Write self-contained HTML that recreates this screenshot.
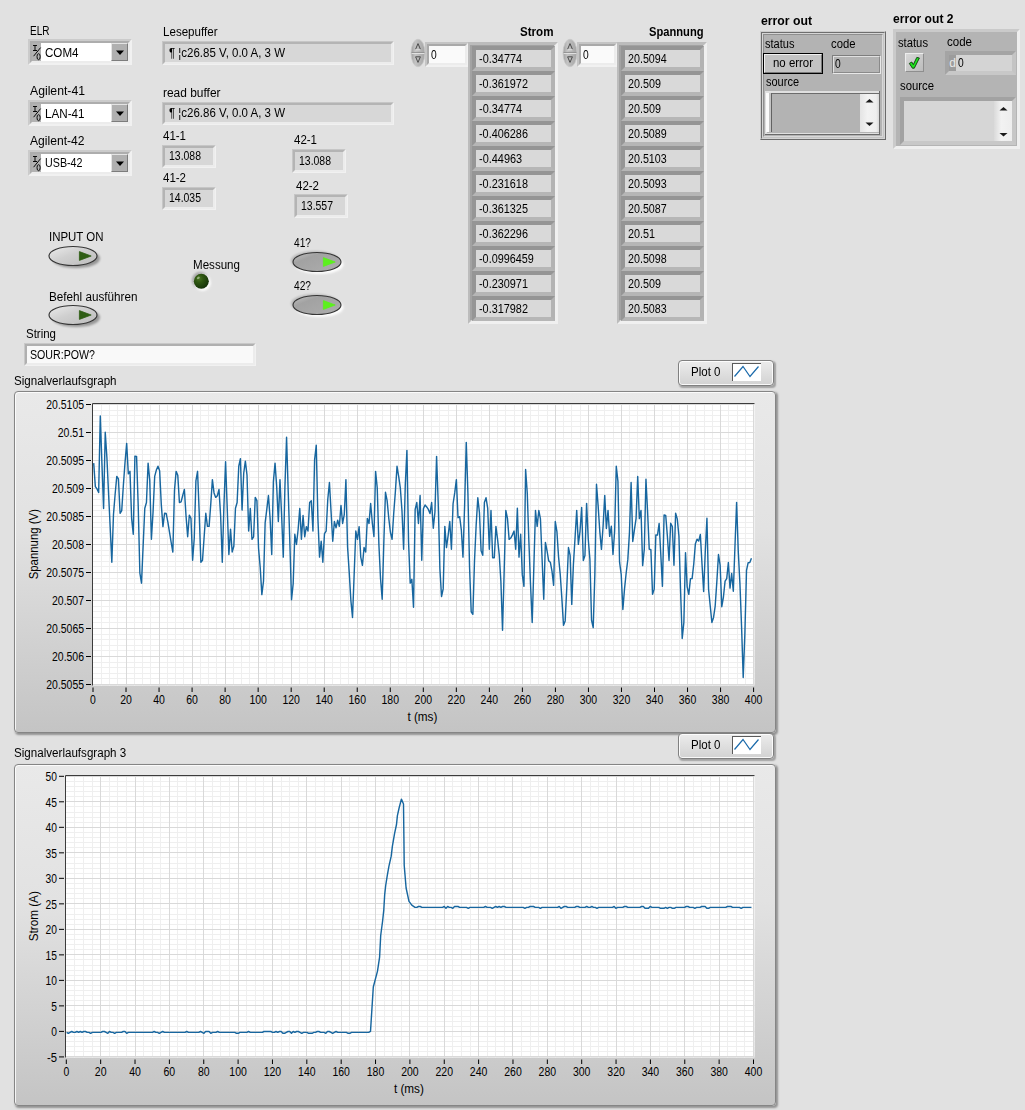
<!DOCTYPE html>
<html><head><meta charset="utf-8"><title>Front Panel</title>
<style>
html,body{margin:0;padding:0;}
body{width:1025px;height:1110px;background:#e1e1e1;position:relative;overflow:hidden;font-family:"Liberation Sans",sans-serif;font-size:12px;color:#000;}
.t{position:absolute;white-space:pre;line-height:14px;transform-origin:0 0;}
div{box-sizing:content-box;}
</style></head><body>
<div class="t" style="left:30.00px;top:24.04px;font-size:12.0px;transform:scaleX(0.8353);">ELR</div>
<div style="position:absolute;left:28px;top:39px;width:100px;height:22px;border:2px solid;border-color:#cbcbcb #f1f1f1 #f1f1f1 #cbcbcb;"><div style="width:96px;height:18px;border:2px solid;border-color:#adadad #ececec #ececec #adadad;background:#fff;"></div></div>
<div style="position:absolute;left:32px;top:43px;width:9px;height:18px;background:#b2b2b2;"></div>
<svg style="position:absolute;left:32px;top:43px" width="10" height="18" viewBox="0 0 10 18"><path d="M1 2.5h4M3 2.5v5M1 7.5h4" stroke="#000" stroke-width="0.95" fill="none"/><path d="M1.6 13.2L8.6 4.6" stroke="#000" stroke-width="0.95" fill="none"/><ellipse cx="6.6" cy="13.7" rx="1.6" ry="3" stroke="#000" stroke-width="0.95" fill="none"/></svg>
<div style="position:absolute;left:111px;top:43px;width:15px;height:16px;border:1px solid;border-color:#e4e4e4 #7c7c7c #7c7c7c #e4e4e4;background:#b0b0b0;"></div>
<svg style="position:absolute;left:111px;top:43px" width="17" height="18"><path d="M5 7.5h8l-4 4.5z" fill="#000"/></svg>
<div class="t" style="left:44.50px;top:45.74px;font-size:12.0px;transform:scaleX(0.9662);">COM4</div>
<div class="t" style="left:30.00px;top:84.04px;font-size:12.0px;transform:scaleX(1.0179);">Agilent-41</div>
<div style="position:absolute;left:28px;top:100px;width:100px;height:22px;border:2px solid;border-color:#cbcbcb #f1f1f1 #f1f1f1 #cbcbcb;"><div style="width:96px;height:18px;border:2px solid;border-color:#adadad #ececec #ececec #adadad;background:#fff;"></div></div>
<div style="position:absolute;left:32px;top:104px;width:9px;height:18px;background:#b2b2b2;"></div>
<svg style="position:absolute;left:32px;top:104px" width="10" height="18" viewBox="0 0 10 18"><path d="M1 2.5h4M3 2.5v5M1 7.5h4" stroke="#000" stroke-width="0.95" fill="none"/><path d="M1.6 13.2L8.6 4.6" stroke="#000" stroke-width="0.95" fill="none"/><ellipse cx="6.6" cy="13.7" rx="1.6" ry="3" stroke="#000" stroke-width="0.95" fill="none"/></svg>
<div style="position:absolute;left:111px;top:104px;width:15px;height:16px;border:1px solid;border-color:#e4e4e4 #7c7c7c #7c7c7c #e4e4e4;background:#b0b0b0;"></div>
<svg style="position:absolute;left:111px;top:104px" width="17" height="18"><path d="M5 7.5h8l-4 4.5z" fill="#000"/></svg>
<div class="t" style="left:44.50px;top:106.74px;font-size:12.0px;transform:scaleX(0.9708);">LAN-41</div>
<div class="t" style="left:30.00px;top:134.04px;font-size:12.0px;transform:scaleX(1.0086);">Agilent-42</div>
<div style="position:absolute;left:28px;top:149.5px;width:100px;height:22px;border:2px solid;border-color:#cbcbcb #f1f1f1 #f1f1f1 #cbcbcb;"><div style="width:96px;height:18px;border:2px solid;border-color:#adadad #ececec #ececec #adadad;background:#fff;"></div></div>
<div style="position:absolute;left:32px;top:153.5px;width:9px;height:18px;background:#b2b2b2;"></div>
<svg style="position:absolute;left:32px;top:153.5px" width="10" height="18" viewBox="0 0 10 18"><path d="M1 2.5h4M3 2.5v5M1 7.5h4" stroke="#000" stroke-width="0.95" fill="none"/><path d="M1.6 13.2L8.6 4.6" stroke="#000" stroke-width="0.95" fill="none"/><ellipse cx="6.6" cy="13.7" rx="1.6" ry="3" stroke="#000" stroke-width="0.95" fill="none"/></svg>
<div style="position:absolute;left:111px;top:153.5px;width:15px;height:16px;border:1px solid;border-color:#e4e4e4 #7c7c7c #7c7c7c #e4e4e4;background:#b0b0b0;"></div>
<svg style="position:absolute;left:111px;top:153.5px" width="17" height="18"><path d="M5 7.5h8l-4 4.5z" fill="#000"/></svg>
<div class="t" style="left:44.50px;top:156.24px;font-size:12.0px;transform:scaleX(0.8925);">USB-42</div>
<div class="t" style="left:163.00px;top:25.04px;font-size:12.0px;transform:scaleX(0.9648);">Lesepuffer</div>
<div style="position:absolute;left:162px;top:41px;width:230px;height:21.5px;border:1px solid;border-color:#c6c6c6 #f1f1f1 #f1f1f1 #c6c6c6;"><div style="width:226px;height:17.5px;border:2px solid;border-color:#b4b4b4 #ececec #ececec #b4b4b4;background:#d7d7d7;"></div></div>
<div class="t" style="left:168.50px;top:45.74px;font-size:12.0px;transform:scaleX(0.9572);">¶ ¦c26.85 V, 0.0 A, 3 W</div>
<div class="t" style="left:163.00px;top:86.04px;font-size:12.0px;transform:scaleX(0.9945);">read buffer</div>
<div style="position:absolute;left:162px;top:101.5px;width:230px;height:21.5px;border:1px solid;border-color:#c6c6c6 #f1f1f1 #f1f1f1 #c6c6c6;"><div style="width:226px;height:17.5px;border:2px solid;border-color:#b4b4b4 #ececec #ececec #b4b4b4;background:#d7d7d7;"></div></div>
<div class="t" style="left:168.50px;top:106.24px;font-size:12.0px;transform:scaleX(0.9572);">¶ ¦c26.86 V, 0.0 A, 3 W</div>
<div class="t" style="left:163.00px;top:129.04px;font-size:12.0px;transform:scaleX(0.9576);">41-1</div>
<div style="position:absolute;left:162px;top:144.5px;width:52px;height:21.5px;border:1px solid;border-color:#c6c6c6 #f1f1f1 #f1f1f1 #c6c6c6;"><div style="width:48px;height:17.5px;border:2px solid;border-color:#b4b4b4 #ececec #ececec #b4b4b4;background:#d7d7d7;"></div></div>
<div class="t" style="left:168.50px;top:149.24px;font-size:12.0px;transform:scaleX(0.8719);">13.088</div>
<div class="t" style="left:163.00px;top:171.04px;font-size:12.0px;transform:scaleX(0.9576);">41-2</div>
<div style="position:absolute;left:162px;top:186.5px;width:52px;height:21.5px;border:1px solid;border-color:#c6c6c6 #f1f1f1 #f1f1f1 #c6c6c6;"><div style="width:48px;height:17.5px;border:2px solid;border-color:#b4b4b4 #ececec #ececec #b4b4b4;background:#d7d7d7;"></div></div>
<div class="t" style="left:168.50px;top:191.24px;font-size:12.0px;transform:scaleX(0.8719);">14.035</div>
<div class="t" style="left:293.50px;top:133.04px;font-size:12.0px;transform:scaleX(0.9576);">42-1</div>
<div style="position:absolute;left:292px;top:149px;width:52px;height:21.5px;border:1px solid;border-color:#c6c6c6 #f1f1f1 #f1f1f1 #c6c6c6;"><div style="width:48px;height:17.5px;border:2px solid;border-color:#b4b4b4 #ececec #ececec #b4b4b4;background:#d7d7d7;"></div></div>
<div class="t" style="left:298.50px;top:153.74px;font-size:12.0px;transform:scaleX(0.8719);">13.088</div>
<div class="t" style="left:295.50px;top:179.04px;font-size:12.0px;transform:scaleX(0.9576);">42-2</div>
<div style="position:absolute;left:294px;top:194px;width:52px;height:22.0px;border:1px solid;border-color:#c6c6c6 #f1f1f1 #f1f1f1 #c6c6c6;"><div style="width:48px;height:18.0px;border:2px solid;border-color:#b4b4b4 #ececec #ececec #b4b4b4;background:#d7d7d7;"></div></div>
<div class="t" style="left:300.50px;top:199.24px;font-size:12.0px;transform:scaleX(0.8719);">13.557</div>
<div class="t" style="left:48.50px;top:229.54px;font-size:12.0px;transform:scaleX(0.9542);">INPUT ON</div>
<svg style="position:absolute;left:38.8px;top:237.5px" width="68" height="36" viewBox="0 0 68 36"><defs><linearGradient id="g72255" x1="0" y1="0" x2="1" y2="1"><stop offset="0" stop-color="#ececec"/><stop offset="0.45" stop-color="#cfcfcf"/><stop offset="1" stop-color="#bdbdbd"/></linearGradient><filter id="fg72255" x="-20%" y="-40%" width="140%" height="180%"><feGaussianBlur stdDeviation="1.3"/></filter></defs><ellipse cx="37" cy="20.5" rx="24" ry="9.5" fill="#000" opacity="0.33" filter="url(#fg72255)"/><ellipse cx="34" cy="18" rx="24" ry="9.5" fill="url(#g72255)" stroke="#363636" stroke-width="1.15"/><path d="M40.4 13.6l11.8 4.4l-11.8 4.4z" fill="#2f5d14" stroke="#2f5d14" stroke-width="0.8" stroke-linejoin="round"/></svg>
<div class="t" style="left:49.00px;top:289.54px;font-size:12.0px;transform:scaleX(0.9754);">Befehl ausführen</div>
<svg style="position:absolute;left:38.8px;top:297px" width="68" height="36" viewBox="0 0 68 36"><defs><linearGradient id="g72315" x1="0" y1="0" x2="1" y2="1"><stop offset="0" stop-color="#ececec"/><stop offset="0.45" stop-color="#cfcfcf"/><stop offset="1" stop-color="#bdbdbd"/></linearGradient><filter id="fg72315" x="-20%" y="-40%" width="140%" height="180%"><feGaussianBlur stdDeviation="1.3"/></filter></defs><ellipse cx="37" cy="20.5" rx="24" ry="9.5" fill="#000" opacity="0.33" filter="url(#fg72315)"/><ellipse cx="34" cy="18" rx="24" ry="9.5" fill="url(#g72315)" stroke="#363636" stroke-width="1.15"/><path d="M40.4 13.6l11.8 4.4l-11.8 4.4z" fill="#2f5d14" stroke="#2f5d14" stroke-width="0.8" stroke-linejoin="round"/></svg>
<div class="t" style="left:293.50px;top:235.54px;font-size:12.0px;transform:scaleX(0.8491);">41?</div>
<svg style="position:absolute;left:282.8px;top:243.5px" width="68" height="36" viewBox="0 0 68 36"><defs><linearGradient id="g316261" x1="0" y1="0" x2="1" y2="1"><stop offset="0" stop-color="#c4c4c4"/><stop offset="0.3" stop-color="#a2a2a2"/><stop offset="1" stop-color="#adadad"/></linearGradient><filter id="fg316261" x="-20%" y="-40%" width="140%" height="180%"><feGaussianBlur stdDeviation="1.3"/></filter></defs><ellipse cx="32" cy="16.5" rx="24" ry="9.5" fill="#000" opacity="0.18" filter="url(#fg316261)"/><ellipse cx="36.5" cy="20.5" rx="24" ry="9.5" fill="#fff" opacity="0.95" filter="url(#fg316261)"/><ellipse cx="34" cy="18" rx="24" ry="9.5" fill="url(#g316261)" stroke="#363636" stroke-width="1.15"/><path d="M40.4 13.6l11.8 4.4l-11.8 4.4z" fill="#5cf01e" stroke="#5cf01e" stroke-width="0.8" stroke-linejoin="round"/></svg>
<div class="t" style="left:293.50px;top:278.84px;font-size:12.0px;transform:scaleX(0.8491);">42?</div>
<svg style="position:absolute;left:282.8px;top:286.5px" width="68" height="36" viewBox="0 0 68 36"><defs><linearGradient id="g316304" x1="0" y1="0" x2="1" y2="1"><stop offset="0" stop-color="#c4c4c4"/><stop offset="0.3" stop-color="#a2a2a2"/><stop offset="1" stop-color="#adadad"/></linearGradient><filter id="fg316304" x="-20%" y="-40%" width="140%" height="180%"><feGaussianBlur stdDeviation="1.3"/></filter></defs><ellipse cx="32" cy="16.5" rx="24" ry="9.5" fill="#000" opacity="0.18" filter="url(#fg316304)"/><ellipse cx="36.5" cy="20.5" rx="24" ry="9.5" fill="#fff" opacity="0.95" filter="url(#fg316304)"/><ellipse cx="34" cy="18" rx="24" ry="9.5" fill="url(#g316304)" stroke="#363636" stroke-width="1.15"/><path d="M40.4 13.6l11.8 4.4l-11.8 4.4z" fill="#5cf01e" stroke="#5cf01e" stroke-width="0.8" stroke-linejoin="round"/></svg>
<div class="t" style="left:192.50px;top:258.04px;font-size:12.0px;transform:scaleX(0.9653);">Messung</div>
<svg style="position:absolute;left:185px;top:265px" width="34" height="34" viewBox="0 0 34 34"><defs><radialGradient id="led" cx="0.35" cy="0.32" r="0.75"><stop offset="0" stop-color="#4a7524"/><stop offset="0.35" stop-color="#2f5712"/><stop offset="1" stop-color="#14300a"/></radialGradient><filter id="lf" x="-30%" y="-30%" width="160%" height="160%"><feGaussianBlur stdDeviation="1"/></filter></defs><circle cx="15.3" cy="15.3" r="8.3" fill="#000" opacity="0.28" filter="url(#lf)"/><circle cx="17.6" cy="17.6" r="8.3" fill="#fff" opacity="0.95" filter="url(#lf)"/><circle cx="16.3" cy="16.3" r="7.5" fill="url(#led)"/><ellipse cx="13.3" cy="12.8" rx="1.6" ry="1.1" fill="#b9cfa6" opacity="0.7" transform="rotate(-35 13.3 12.8)"/></svg>
<div class="t" style="left:25.50px;top:326.54px;font-size:12.0px;transform:scaleX(0.9570);">String</div>
<div style="position:absolute;left:24px;top:342.5px;width:230px;height:21.5px;border:1px solid;border-color:#c8c8c8 #f1f1f1 #f1f1f1 #c8c8c8;"><div style="width:226px;height:17.5px;border:2px solid;border-color:#b0b0b0 #ececec #ececec #b0b0b0;background:#f9f9f9;"></div></div>
<div class="t" style="left:30.00px;top:347.74px;font-size:12.0px;transform:scaleX(0.8862);">SOUR:POW?</div>
<svg style="position:absolute;left:408.8px;top:37px" width="18" height="32" viewBox="0 0 18 32"><defs><linearGradient id="s417" x1="0" y1="0" x2="1" y2="0"><stop offset="0" stop-color="#9e9e9e"/><stop offset="0.3" stop-color="#c4c4c4"/><stop offset="1" stop-color="#a4a4a4"/></linearGradient></defs><ellipse cx="9" cy="16" rx="7" ry="13.8" fill="url(#s417)" stroke="#c9c9c9" stroke-width="0.8"/><path d="M2.6 16.4h12.8" stroke="#e6e6e6" stroke-width="1"/><path d="M2.6 15.5h12.8" stroke="#8c8c8c" stroke-width="0.8"/><path d="M6.6 12.2L9 6.6L11.4 12.2" stroke="#4a4a4a" stroke-width="1" fill="none"/><path d="M6.6 12.8h4.8" stroke="#e4e4e4" stroke-width="0.9"/><path d="M6.6 19.8L9 25.4L11.4 19.8z" stroke="#4a4a4a" stroke-width="1" fill="none"/></svg>
<div style="position:absolute;left:424.5px;top:42px;width:40.0px;height:21px;border:2px solid;border-color:#c4c4c4 #f1f1f1 #f1f1f1 #c4c4c4;"><div style="width:36.0px;height:17px;border:2px solid;border-color:#a9a9a9 #ececec #ececec #a9a9a9;background:#fafafa;"></div></div>
<div class="t" style="left:430.70px;top:47.84px;font-size:12.0px;transform:scaleX(0.8541);">0</div>
<div style="position:absolute;left:468px;top:42px;width:82px;height:274px;border-style:solid;border-width:4px 4px 4px 4px;border-color:#bcbcbc #f0f0f0 #f0f0f0 #bcbcbc;background:#a9a9a9;"></div>
<div style="position:absolute;left:470px;top:44.5px;width:84px;height:275.5px;border-style:solid;border-width:2px 0 0 2px;border-color:#a2a2a2;box-sizing:border-box;"></div>
<div style="position:absolute;left:472px;top:46px;width:75px;height:17px;border:4px solid;border-color:#959595 #b3b3b3 #b6b6b6 #959595;background:#d9d9d9;"></div>
<div class="t" style="left:478.70px;top:51.54px;font-size:12.0px;transform:scaleX(0.9098);">-0.34774</div>
<div style="position:absolute;left:472px;top:71px;width:75px;height:17px;border:4px solid;border-color:#959595 #b3b3b3 #b6b6b6 #959595;background:#d9d9d9;"></div>
<div class="t" style="left:478.70px;top:76.54px;font-size:12.0px;transform:scaleX(0.9057);">-0.361972</div>
<div style="position:absolute;left:472px;top:96px;width:75px;height:17px;border:4px solid;border-color:#959595 #b3b3b3 #b6b6b6 #959595;background:#d9d9d9;"></div>
<div class="t" style="left:478.70px;top:101.54px;font-size:12.0px;transform:scaleX(0.9098);">-0.34774</div>
<div style="position:absolute;left:472px;top:121px;width:75px;height:17px;border:4px solid;border-color:#959595 #b3b3b3 #b6b6b6 #959595;background:#d9d9d9;"></div>
<div class="t" style="left:478.70px;top:126.54px;font-size:12.0px;transform:scaleX(0.9057);">-0.406286</div>
<div style="position:absolute;left:472px;top:146px;width:75px;height:17px;border:4px solid;border-color:#959595 #b3b3b3 #b6b6b6 #959595;background:#d9d9d9;"></div>
<div class="t" style="left:478.70px;top:151.54px;font-size:12.0px;transform:scaleX(0.9098);">-0.44963</div>
<div style="position:absolute;left:472px;top:171px;width:75px;height:17px;border:4px solid;border-color:#959595 #b3b3b3 #b6b6b6 #959595;background:#d9d9d9;"></div>
<div class="t" style="left:478.70px;top:176.54px;font-size:12.0px;transform:scaleX(0.9057);">-0.231618</div>
<div style="position:absolute;left:472px;top:196px;width:75px;height:17px;border:4px solid;border-color:#959595 #b3b3b3 #b6b6b6 #959595;background:#d9d9d9;"></div>
<div class="t" style="left:478.70px;top:201.54px;font-size:12.0px;transform:scaleX(0.9057);">-0.361325</div>
<div style="position:absolute;left:472px;top:221px;width:75px;height:17px;border:4px solid;border-color:#959595 #b3b3b3 #b6b6b6 #959595;background:#d9d9d9;"></div>
<div class="t" style="left:478.70px;top:226.54px;font-size:12.0px;transform:scaleX(0.9057);">-0.362296</div>
<div style="position:absolute;left:472px;top:246px;width:75px;height:17px;border:4px solid;border-color:#959595 #b3b3b3 #b6b6b6 #959595;background:#d9d9d9;"></div>
<div class="t" style="left:478.70px;top:251.54px;font-size:12.0px;transform:scaleX(0.9025);">-0.0996459</div>
<div style="position:absolute;left:472px;top:271px;width:75px;height:17px;border:4px solid;border-color:#959595 #b3b3b3 #b6b6b6 #959595;background:#d9d9d9;"></div>
<div class="t" style="left:478.70px;top:276.54px;font-size:12.0px;transform:scaleX(0.9057);">-0.230971</div>
<div style="position:absolute;left:472px;top:296px;width:75px;height:17px;border:4px solid;border-color:#959595 #b3b3b3 #b6b6b6 #959595;background:#d9d9d9;"></div>
<div class="t" style="left:478.70px;top:301.54px;font-size:12.0px;transform:scaleX(0.9057);">-0.317982</div>
<div class="t" style="left:519.50px;top:25.04px;font-size:12.0px;transform:scaleX(0.9662);font-weight:bold;">Strom</div>
<svg style="position:absolute;left:561.0999999999999px;top:37px" width="18" height="32" viewBox="0 0 18 32"><defs><linearGradient id="s570" x1="0" y1="0" x2="1" y2="0"><stop offset="0" stop-color="#9e9e9e"/><stop offset="0.3" stop-color="#c4c4c4"/><stop offset="1" stop-color="#a4a4a4"/></linearGradient></defs><ellipse cx="9" cy="16" rx="7" ry="13.8" fill="url(#s570)" stroke="#c9c9c9" stroke-width="0.8"/><path d="M2.6 16.4h12.8" stroke="#e6e6e6" stroke-width="1"/><path d="M2.6 15.5h12.8" stroke="#8c8c8c" stroke-width="0.8"/><path d="M6.6 12.2L9 6.6L11.4 12.2" stroke="#4a4a4a" stroke-width="1" fill="none"/><path d="M6.6 12.8h4.8" stroke="#e4e4e4" stroke-width="0.9"/><path d="M6.6 19.8L9 25.4L11.4 19.8z" stroke="#4a4a4a" stroke-width="1" fill="none"/></svg>
<div style="position:absolute;left:576.8px;top:42px;width:37.1px;height:21px;border:2px solid;border-color:#c4c4c4 #f1f1f1 #f1f1f1 #c4c4c4;"><div style="width:33.1px;height:17px;border:2px solid;border-color:#a9a9a9 #ececec #ececec #a9a9a9;background:#fafafa;"></div></div>
<div class="t" style="left:583.00px;top:47.84px;font-size:12.0px;transform:scaleX(0.8541);">0</div>
<div style="position:absolute;left:617.4px;top:42px;width:82px;height:274px;border-style:solid;border-width:4px 4px 4px 4px;border-color:#bcbcbc #f0f0f0 #f0f0f0 #bcbcbc;background:#a9a9a9;"></div>
<div style="position:absolute;left:619.4px;top:44.5px;width:84px;height:275.5px;border-style:solid;border-width:2px 0 0 2px;border-color:#a2a2a2;box-sizing:border-box;"></div>
<div style="position:absolute;left:621.4px;top:46px;width:75px;height:17px;border:4px solid;border-color:#959595 #b3b3b3 #b6b6b6 #959595;background:#d9d9d9;"></div>
<div class="t" style="left:628.10px;top:51.54px;font-size:12.0px;transform:scaleX(0.8922);">20.5094</div>
<div style="position:absolute;left:621.4px;top:71px;width:75px;height:17px;border:4px solid;border-color:#959595 #b3b3b3 #b6b6b6 #959595;background:#d9d9d9;"></div>
<div class="t" style="left:628.10px;top:76.54px;font-size:12.0px;transform:scaleX(0.8951);">20.509</div>
<div style="position:absolute;left:621.4px;top:96px;width:75px;height:17px;border:4px solid;border-color:#959595 #b3b3b3 #b6b6b6 #959595;background:#d9d9d9;"></div>
<div class="t" style="left:628.10px;top:101.54px;font-size:12.0px;transform:scaleX(0.8951);">20.509</div>
<div style="position:absolute;left:621.4px;top:121px;width:75px;height:17px;border:4px solid;border-color:#959595 #b3b3b3 #b6b6b6 #959595;background:#d9d9d9;"></div>
<div class="t" style="left:628.10px;top:126.54px;font-size:12.0px;transform:scaleX(0.8922);">20.5089</div>
<div style="position:absolute;left:621.4px;top:146px;width:75px;height:17px;border:4px solid;border-color:#959595 #b3b3b3 #b6b6b6 #959595;background:#d9d9d9;"></div>
<div class="t" style="left:628.10px;top:151.54px;font-size:12.0px;transform:scaleX(0.8922);">20.5103</div>
<div style="position:absolute;left:621.4px;top:171px;width:75px;height:17px;border:4px solid;border-color:#959595 #b3b3b3 #b6b6b6 #959595;background:#d9d9d9;"></div>
<div class="t" style="left:628.10px;top:176.54px;font-size:12.0px;transform:scaleX(0.8922);">20.5093</div>
<div style="position:absolute;left:621.4px;top:196px;width:75px;height:17px;border:4px solid;border-color:#959595 #b3b3b3 #b6b6b6 #959595;background:#d9d9d9;"></div>
<div class="t" style="left:628.10px;top:201.54px;font-size:12.0px;transform:scaleX(0.8922);">20.5087</div>
<div style="position:absolute;left:621.4px;top:221px;width:75px;height:17px;border:4px solid;border-color:#959595 #b3b3b3 #b6b6b6 #959595;background:#d9d9d9;"></div>
<div class="t" style="left:628.10px;top:226.54px;font-size:12.0px;transform:scaleX(0.8992);">20.51</div>
<div style="position:absolute;left:621.4px;top:246px;width:75px;height:17px;border:4px solid;border-color:#959595 #b3b3b3 #b6b6b6 #959595;background:#d9d9d9;"></div>
<div class="t" style="left:628.10px;top:251.54px;font-size:12.0px;transform:scaleX(0.8922);">20.5098</div>
<div style="position:absolute;left:621.4px;top:271px;width:75px;height:17px;border:4px solid;border-color:#959595 #b3b3b3 #b6b6b6 #959595;background:#d9d9d9;"></div>
<div class="t" style="left:628.10px;top:276.54px;font-size:12.0px;transform:scaleX(0.8951);">20.509</div>
<div style="position:absolute;left:621.4px;top:296px;width:75px;height:17px;border:4px solid;border-color:#959595 #b3b3b3 #b6b6b6 #959595;background:#d9d9d9;"></div>
<div class="t" style="left:628.10px;top:301.54px;font-size:12.0px;transform:scaleX(0.8922);">20.5083</div>
<div class="t" style="left:648.70px;top:25.04px;font-size:12.0px;transform:scaleX(0.9291);font-weight:bold;">Spannung</div>
<div class="t" style="left:760.70px;top:13.54px;font-size:12.0px;transform:scaleX(1.0199);font-weight:bold;">error out</div>
<div style="position:absolute;left:759.5px;top:31px;width:124.5px;height:106.75px;border:1px solid;border-color:#cdcdcd #6a6a6a #6a6a6a #cdcdcd;background:#b3b3b3;"></div>
<div style="position:absolute;left:760.5px;top:32px;width:122.5px;height:104.75px;border:1px solid;border-color:#6e6e6e #d4d4d4 #d4d4d4 #6e6e6e;"></div>
<div style="position:absolute;left:761.5px;top:33px;width:120.5px;height:102.75px;border:1px solid;border-color:#d6d6d6 #c4c4c4 #c4c4c4 #d6d6d6;"></div>
<div style="position:absolute;left:762.5px;top:34px;width:118.5px;height:100.75px;border:1px solid;border-color:#8e8e8e #d8d8d8 #d8d8d8 #8e8e8e;"></div>
<div class="t" style="left:764.80px;top:36.64px;font-size:12.0px;transform:scaleX(0.9214);">status</div>
<div style="position:absolute;left:763px;top:53px;width:58px;height:19px;border:1px solid #000;background:#c3c3c3;"></div>
<div style="position:absolute;left:764px;top:54px;width:56px;height:17px;border:1px solid;border-color:#f0f0f0 #7a7a7a #7a7a7a #f0f0f0;"></div>
<div class="t" style="left:772.50px;top:56.04px;font-size:12.0px;transform:scaleX(0.9520);">no error</div>
<div class="t" style="left:830.50px;top:37.14px;font-size:12.0px;transform:scaleX(0.9416);">code</div>
<div style="position:absolute;left:831.5px;top:54.5px;width:47px;height:17.5px;border:1px solid;border-color:#7e7e7e #e8e8e8 #e8e8e8 #7e7e7e;background:#b3b3b3;"></div>
<div style="position:absolute;left:832.5px;top:55.5px;width:45px;height:15.5px;border:1px solid;border-color:#e0e0e0 #8a8a8a #8a8a8a #e0e0e0;"></div>
<div class="t" style="left:835.00px;top:57.04px;font-size:12.0px;transform:scaleX(0.8541);">0</div>
<div class="t" style="left:766.00px;top:74.84px;font-size:12.0px;transform:scaleX(0.9162);">source</div>
<div style="position:absolute;left:765px;top:91px;width:114px;height:43px;background:#e0e0e0;border-right:1px solid #6a6a6a;border-bottom:1px solid #6a6a6a;"></div>
<div style="position:absolute;left:767px;top:93px;width:112px;height:39px;background:#b3b3b3;border-top:1px solid #6c6c6c;"></div>
<div style="position:absolute;left:766px;top:93px;width:3.3px;height:39px;background:#fbfbfb;"></div>
<div style="position:absolute;left:769.3px;top:93px;width:1.6px;height:39px;background:#c4c4c4;"></div>
<div style="position:absolute;left:770.9px;top:93px;width:1px;height:39px;background:#626262;"></div>
<div style="position:absolute;left:860px;top:94px;width:19px;height:38px;background:linear-gradient(90deg,#e4e4e4,#f2f2f2 40%,#eeeeee 85%,#d8d8d8);"></div>
<svg style="position:absolute;left:860px;top:93px" width="18" height="40"><path d="M5.5 9.5h8l-4-3.5z" fill="#1a1a1a"/><path d="M5.5 29.5h8l-4 3.5z" fill="#1a1a1a"/></svg>
<div class="t" style="left:892.70px;top:11.64px;font-size:12.0px;transform:scaleX(1.0081);font-weight:bold;">error out 2</div>
<div style="position:absolute;left:893px;top:29px;width:120.5px;height:113.5px;border:3px solid;border-color:#cacaca #efefef #efefef #cacaca;background:#b4b4b4;"></div>
<div class="t" style="left:898.40px;top:35.84px;font-size:12.0px;transform:scaleX(0.9370);">status</div>
<div style="position:absolute;left:905px;top:53px;width:17px;height:17px;border:1px solid;border-color:#ededed #8e8e8e #8e8e8e #ededed;background:linear-gradient(135deg,#d8d8d8,#bcbcbc);"></div>
<svg style="position:absolute;left:905px;top:53px" width="19" height="19" viewBox="0 0 19 19"><path d="M4.3 10.4L6.8 9L8.3 11.6L11.8 4.4L14.4 5L9.3 15.2L7.4 15.2z" fill="#1fe21f" stroke="#0c3c0c" stroke-width="0.9" stroke-linejoin="round"/></svg>
<div class="t" style="left:946.70px;top:34.64px;font-size:12.0px;transform:scaleX(0.9608);">code</div>
<div style="position:absolute;left:944.5px;top:51px;width:63px;height:16px;border:4px solid;border-color:#a4a4a4 #c4c4c4 #c8c8c8 #a4a4a4;background:#d4d4d4;"></div>
<div style="position:absolute;left:948.5px;top:55px;width:7px;height:16px;background:#9c9c9c;"></div>
<div class="t" style="left:949.30px;top:56.44px;font-size:12.0px;color:#e8e8e8;">d</div>
<div class="t" style="left:957.50px;top:56.44px;font-size:12.0px;transform:scaleX(0.8541);">0</div>
<div class="t" style="left:900.00px;top:79.44px;font-size:12.0px;transform:scaleX(0.9440);">source</div>
<div style="position:absolute;left:900px;top:96.5px;width:108px;height:40.5px;border:4px solid;border-color:#a2a2a2 #c6c6c6 #c8c8c8 #a2a2a2;background:#d6d6d6;"></div>
<div style="position:absolute;left:994px;top:100.5px;width:18px;height:40.5px;background:linear-gradient(90deg,#dadada,#f2f2f2 40%,#ededed);"></div>
<svg style="position:absolute;left:994px;top:100.5px" width="18" height="41"><path d="M5.5 9.5h8l-4-3.5z" fill="#1a1a1a"/><path d="M5.5 32h8l-4 3.5z" fill="#1a1a1a"/></svg>
<div style="position:absolute;left:677.5px;top:359.5px;width:94.5px;height:24px;border:1px solid #808080;border-radius:4px;background:linear-gradient(#ececec,#d2d2d2);box-shadow:1.5px 1.5px 1.5px rgba(0,0,0,0.28), inset 0 0 0 1px rgba(255,255,255,0.85);"></div>
<div class="t" style="left:691.00px;top:364.74px;font-size:12.0px;transform:scaleX(0.9614);">Plot 0</div>
<div style="position:absolute;left:732px;top:362.5px;width:27.5px;height:17.5px;background:#fff;border-top:1px solid #5a5a5a;border-left:1px solid #5a5a5a;"></div>
<svg style="position:absolute;left:733px;top:363.5px" width="28" height="18"><path d="M1.5 12.5L10 2.5L17 12.5L25.5 2.5" stroke="#1a6aab" stroke-width="1.2" fill="none"/></svg>
<div class="t" style="left:13.50px;top:374.04px;font-size:12.0px;transform:scaleX(0.9670);">Signalverlaufsgraph</div>
<div style="position:absolute;left:13.5px;top:391px;width:762px;height:342px;border:1px solid #858585;border-radius:4px;background:linear-gradient(#e9e9e9,#e2e2e2 40%,#c4c4c4);box-shadow:1.5px 1.5px 2px rgba(0,0,0,0.35), inset 1px 1px 0 0 rgba(255,255,255,0.8);box-sizing:border-box;"></div>
<svg style="position:absolute;left:14px;top:392px" width="762" height="342" viewBox="14 392 762 342" font-family="Liberation Sans, sans-serif" font-size="12"><rect x="92" y="403" width="662.5" height="282.5" fill="#fff"/><path d="M101.50 403V685.5M109.50 403V685.5M117.50 403V685.5M134.50 403V685.5M142.50 403V685.5M150.50 403V685.5M167.50 403V685.5M175.50 403V685.5M183.50 403V685.5M200.50 403V685.5M208.50 403V685.5M216.50 403V685.5M233.50 403V685.5M241.50 403V685.5M249.50 403V685.5M266.50 403V685.5M274.50 403V685.5M282.50 403V685.5M299.50 403V685.5M307.50 403V685.5M315.50 403V685.5M332.50 403V685.5M340.50 403V685.5M348.50 403V685.5M365.50 403V685.5M373.50 403V685.5M382.50 403V685.5M398.50 403V685.5M406.50 403V685.5M415.50 403V685.5M431.50 403V685.5M439.50 403V685.5M448.50 403V685.5M464.50 403V685.5M472.50 403V685.5M481.50 403V685.5M497.50 403V685.5M505.50 403V685.5M514.50 403V685.5M530.50 403V685.5M538.50 403V685.5M547.50 403V685.5M563.50 403V685.5M571.50 403V685.5M580.50 403V685.5M596.50 403V685.5M604.50 403V685.5M613.50 403V685.5M629.50 403V685.5M637.50 403V685.5M646.50 403V685.5M662.50 403V685.5M671.50 403V685.5M679.50 403V685.5M695.50 403V685.5M704.50 403V685.5M712.50 403V685.5M728.50 403V685.5M737.50 403V685.5M745.50 403V685.5M92 410.50H754.5M92 415.50H754.5M92 421.50H754.5M92 426.50H754.5M92 438.50H754.5M92 443.50H754.5M92 449.50H754.5M92 454.50H754.5M92 466.50H754.5M92 471.50H754.5M92 477.50H754.5M92 482.50H754.5M92 494.50H754.5M92 499.50H754.5M92 505.50H754.5M92 510.50H754.5M92 522.50H754.5M92 527.50H754.5M92 533.50H754.5M92 538.50H754.5M92 550.50H754.5M92 555.50H754.5M92 561.50H754.5M92 566.50H754.5M92 578.50H754.5M92 583.50H754.5M92 589.50H754.5M92 594.50H754.5M92 606.50H754.5M92 611.50H754.5M92 617.50H754.5M92 622.50H754.5M92 634.50H754.5M92 639.50H754.5M92 645.50H754.5M92 650.50H754.5M92 662.50H754.5M92 667.50H754.5M92 673.50H754.5M92 678.50H754.5" stroke="#efefef" stroke-width="1" fill="none"/><path d="M126.50 403V685.5M159.50 403V685.5M192.50 403V685.5M225.50 403V685.5M258.50 403V685.5M291.50 403V685.5M324.50 403V685.5M357.50 403V685.5M390.50 403V685.5M423.50 403V685.5M456.50 403V685.5M489.50 403V685.5M522.50 403V685.5M555.50 403V685.5M588.50 403V685.5M621.50 403V685.5M654.50 403V685.5M687.50 403V685.5M720.50 403V685.5M753.50 403V685.5M92 404.50H754.5M92 432.50H754.5M92 460.50H754.5M92 488.50H754.5M92 516.50H754.5M92 544.50H754.5M92 572.50H754.5M92 600.50H754.5M92 628.50H754.5M92 656.50H754.5M92 684.50H754.5" stroke="#d9d9d9" stroke-width="1" fill="none"/><path d="M93.70 463.09 L95.35 486.59 L97.00 488.88 L98.65 492.56 L100.29 416.07 L101.94 463.72 L103.59 508.45 L105.24 432.21 L106.89 457.37 L108.54 492.95 L110.19 527.25 L111.83 562.20 L113.48 514.55 L115.13 494.22 L116.78 476.43 L118.43 478.97 L120.08 513.28 L121.72 510.73 L123.37 485.32 L125.02 462.45 L126.67 443.39 L128.32 473.89 L129.97 471.34 L131.62 518.36 L133.26 534.24 L134.91 456.10 L136.56 456.35 L138.21 505.65 L139.86 573.00 L141.51 583.16 L143.16 545.04 L144.80 508.19 L146.45 502.48 L148.10 463.09 L149.75 480.24 L151.40 539.32 L153.05 512.01 L154.69 476.43 L156.34 470.07 L157.99 466.26 L159.64 470.71 L161.29 504.38 L162.94 526.62 L164.59 513.28 L166.23 513.53 L167.88 522.17 L169.53 532.34 L171.18 542.50 L172.83 552.03 L174.48 490.40 L176.12 471.34 L177.77 475.16 L179.42 502.48 L181.07 501.84 L182.72 495.49 L184.37 489.39 L186.02 515.82 L187.66 536.78 L189.31 515.18 L190.96 518.36 L192.61 560.29 L194.26 538.05 L195.91 480.87 L197.56 471.34 L199.20 512.64 L200.85 562.20 L202.50 560.29 L204.15 536.78 L205.80 513.28 L207.45 526.36 L209.10 526.36 L210.74 504.38 L212.39 479.60 L214.04 492.95 L215.69 497.39 L217.34 495.74 L218.99 489.39 L220.63 515.82 L222.28 562.20 L223.93 505.65 L225.58 461.81 L227.23 508.19 L228.88 554.57 L230.53 529.16 L232.17 552.03 L233.82 546.31 L235.47 508.19 L237.12 502.48 L238.77 466.26 L240.42 458.64 L242.06 510.10 L243.71 473.25 L245.36 461.18 L247.01 475.16 L248.66 531.06 L250.31 508.45 L251.96 539.32 L253.60 536.78 L255.25 497.39 L256.90 500.57 L258.55 548.22 L260.20 567.28 L261.85 594.60 L263.50 581.26 L265.14 522.81 L266.79 509.46 L268.44 495.49 L270.09 518.36 L271.74 554.57 L273.39 481.51 L275.04 463.09 L276.68 486.59 L278.33 521.53 L279.98 479.60 L281.63 515.82 L283.28 557.11 L284.93 486.59 L286.57 437.29 L288.22 491.67 L289.87 543.14 L291.52 599.68 L293.17 583.80 L294.82 534.24 L296.47 544.41 L298.11 529.79 L299.76 508.45 L301.41 539.32 L303.06 515.56 L304.71 536.78 L306.36 526.62 L308.00 531.06 L309.65 502.48 L311.30 500.82 L312.95 531.06 L314.60 459.91 L316.25 445.30 L317.90 518.36 L319.54 557.11 L321.19 541.23 L322.84 562.20 L324.49 533.61 L326.14 531.06 L327.79 499.30 L329.44 482.53 L331.08 512.01 L332.73 541.23 L334.38 521.53 L336.03 527.89 L337.68 520.26 L339.33 526.24 L340.98 505.40 L342.62 523.44 L344.27 514.55 L345.92 479.60 L347.57 546.95 L349.22 572.36 L350.87 600.32 L352.51 617.47 L354.16 574.27 L355.81 531.06 L357.46 539.32 L359.11 526.62 L360.76 557.11 L362.41 565.37 L364.05 547.58 L365.70 552.03 L367.35 518.36 L369.00 523.44 L370.65 503.49 L372.30 522.81 L373.94 536.53 L375.59 471.34 L377.24 487.86 L378.89 544.41 L380.54 578.71 L382.19 599.30 L383.84 541.87 L385.48 492.31 L387.13 500.57 L388.78 518.36 L390.43 532.34 L392.08 539.32 L393.73 513.28 L395.38 491.67 L397.02 466.26 L398.67 476.43 L400.32 487.86 L401.97 510.73 L403.62 549.24 L405.27 485.32 L406.92 450.38 L408.56 541.87 L410.21 583.16 L411.86 579.35 L413.51 607.30 L415.16 509.46 L416.81 502.48 L418.45 523.44 L420.10 495.49 L421.75 560.29 L423.40 508.83 L425.05 505.02 L426.70 506.92 L428.35 509.46 L429.99 513.53 L431.64 502.48 L433.29 528.27 L434.94 512.01 L436.59 456.35 L438.24 503.75 L439.88 568.55 L441.53 596.50 L443.18 588.88 L444.83 526.36 L446.48 547.58 L448.13 535.51 L449.78 521.53 L451.42 549.24 L453.07 503.75 L454.72 492.95 L456.37 479.60 L458.02 517.72 L459.67 516.71 L461.32 529.79 L462.96 557.11 L464.61 505.65 L466.26 442.37 L467.91 492.95 L469.56 567.28 L471.21 611.75 L472.86 614.29 L474.50 560.93 L476.15 525.35 L477.80 497.77 L479.45 512.64 L481.10 550.76 L482.75 555.21 L484.39 502.48 L486.04 497.77 L487.69 508.19 L489.34 549.24 L490.99 510.48 L492.64 557.75 L494.29 557.75 L495.93 526.36 L497.58 539.32 L499.23 554.57 L500.88 581.26 L502.53 630.18 L504.18 570.45 L505.82 510.48 L507.47 518.36 L509.12 539.32 L510.77 538.05 L512.42 534.88 L514.07 531.06 L515.72 549.24 L517.36 508.19 L519.01 557.11 L520.66 534.24 L522.31 574.90 L523.96 586.34 L525.61 469.44 L527.26 492.95 L528.90 541.87 L530.55 585.07 L532.20 622.55 L533.85 566.64 L535.50 510.48 L537.15 526.36 L538.80 510.48 L540.44 518.99 L542.09 559.02 L543.74 599.30 L545.39 542.50 L547.04 550.76 L548.69 560.93 L550.33 562.20 L551.98 571.09 L553.63 585.32 L555.28 521.53 L556.93 531.70 L558.58 557.11 L560.23 574.27 L561.87 598.66 L563.52 625.35 L565.17 620.90 L566.82 586.97 L568.47 547.58 L570.12 555.46 L571.76 604.38 L573.41 564.36 L575.06 537.67 L576.71 510.35 L578.36 544.41 L580.01 531.32 L581.66 507.43 L583.30 560.54 L584.95 555.46 L586.60 503.36 L588.25 538.94 L589.90 559.27 L591.55 620.26 L593.20 627.63 L594.84 574.52 L596.49 484.30 L598.14 505.91 L599.79 531.32 L601.44 549.36 L603.09 526.24 L604.74 495.36 L606.38 528.52 L608.03 510.35 L609.68 536.40 L611.33 526.24 L612.98 554.44 L614.63 531.32 L616.27 466.26 L617.92 481.13 L619.57 562.20 L621.22 574.52 L622.87 609.46 L624.52 588.88 L626.17 573.00 L627.81 559.65 L629.46 532.59 L631.11 482.40 L632.76 541.48 L634.41 529.79 L636.06 518.61 L637.71 476.43 L639.35 518.61 L641.00 510.35 L642.65 565.63 L644.30 549.11 L645.95 479.22 L647.60 512.01 L649.24 549.11 L650.89 549.74 L652.54 594.22 L654.19 589.13 L655.84 534.88 L657.49 535.13 L659.14 523.44 L660.78 554.19 L662.43 586.34 L664.08 515.05 L665.73 515.44 L667.38 536.15 L669.03 560.42 L670.68 523.31 L672.32 526.49 L673.97 565.25 L675.62 513.15 L677.27 518.87 L678.92 536.02 L680.57 590.66 L682.21 638.43 L683.86 622.55 L685.51 552.67 L687.16 586.85 L688.81 594.34 L690.46 578.59 L692.11 578.59 L693.75 563.97 L695.40 543.64 L697.05 539.20 L698.70 541.10 L700.35 534.50 L702.00 563.97 L703.65 591.42 L705.29 551.27 L706.94 518.23 L708.59 589.51 L710.24 606.03 L711.89 622.55 L713.54 617.47 L715.18 606.03 L716.83 581.89 L718.48 554.57 L720.13 565.25 L721.78 606.67 L723.43 597.01 L725.08 581.13 L726.72 578.59 L728.37 562.45 L730.02 588.12 L731.67 573.50 L733.32 591.29 L734.97 546.19 L736.62 502.35 L738.26 551.27 L739.91 583.16 L741.56 626.36 L743.21 677.57 L744.86 633.99 L746.51 570.45 L748.15 562.70 L749.80 562.45 L751.45 558.26" stroke="#17669f" stroke-width="1.42" fill="none" stroke-linejoin="round"/><path d="M92.5 685.5V403.5H754.5" stroke="#3c3c3c" stroke-width="1" fill="none"/><path d="M86 404.50H91M86 432.50H91M86 460.50H91M86 488.50H91M86 516.50H91M86 544.50H91M86 572.50H91M86 600.50H91M86 628.50H91M86 656.50H91M86 684.50H91M93.00 687.5V692.0M126.03 687.5V692.0M159.06 687.5V692.0M192.09 687.5V692.0M225.12 687.5V692.0M258.15 687.5V692.0M291.18 687.5V692.0M324.21 687.5V692.0M357.24 687.5V692.0M390.27 687.5V692.0M423.30 687.5V692.0M456.33 687.5V692.0M489.36 687.5V692.0M522.39 687.5V692.0M555.42 687.5V692.0M588.45 687.5V692.0M621.48 687.5V692.0M654.51 687.5V692.0M687.54 687.5V692.0M720.57 687.5V692.0M753.60 687.5V692.0" stroke="#000" stroke-width="1" fill="none"/><text x="84.0" y="408.60" text-anchor="end" textLength="37.7" lengthAdjust="spacingAndGlyphs">20.5105</text><text x="84.0" y="436.60" text-anchor="end" textLength="26.3" lengthAdjust="spacingAndGlyphs">20.51</text><text x="84.0" y="464.60" text-anchor="end" textLength="37.7" lengthAdjust="spacingAndGlyphs">20.5095</text><text x="84.0" y="492.60" text-anchor="end" textLength="32.0" lengthAdjust="spacingAndGlyphs">20.509</text><text x="84.0" y="520.60" text-anchor="end" textLength="37.7" lengthAdjust="spacingAndGlyphs">20.5085</text><text x="84.0" y="548.60" text-anchor="end" textLength="32.0" lengthAdjust="spacingAndGlyphs">20.508</text><text x="84.0" y="576.60" text-anchor="end" textLength="37.7" lengthAdjust="spacingAndGlyphs">20.5075</text><text x="84.0" y="604.60" text-anchor="end" textLength="32.0" lengthAdjust="spacingAndGlyphs">20.507</text><text x="84.0" y="632.60" text-anchor="end" textLength="37.7" lengthAdjust="spacingAndGlyphs">20.5065</text><text x="84.0" y="660.60" text-anchor="end" textLength="32.0" lengthAdjust="spacingAndGlyphs">20.506</text><text x="84.0" y="688.60" text-anchor="end" textLength="37.7" lengthAdjust="spacingAndGlyphs">20.5055</text><text x="93.00" y="703.9" text-anchor="middle" textLength="5.8" lengthAdjust="spacingAndGlyphs">0</text><text x="126.03" y="703.9" text-anchor="middle" textLength="11.7" lengthAdjust="spacingAndGlyphs">20</text><text x="159.06" y="703.9" text-anchor="middle" textLength="11.7" lengthAdjust="spacingAndGlyphs">40</text><text x="192.09" y="703.9" text-anchor="middle" textLength="11.7" lengthAdjust="spacingAndGlyphs">60</text><text x="225.12" y="703.9" text-anchor="middle" textLength="11.7" lengthAdjust="spacingAndGlyphs">80</text><text x="258.15" y="703.9" text-anchor="middle" textLength="17.5" lengthAdjust="spacingAndGlyphs">100</text><text x="291.18" y="703.9" text-anchor="middle" textLength="17.5" lengthAdjust="spacingAndGlyphs">120</text><text x="324.21" y="703.9" text-anchor="middle" textLength="17.5" lengthAdjust="spacingAndGlyphs">140</text><text x="357.24" y="703.9" text-anchor="middle" textLength="17.5" lengthAdjust="spacingAndGlyphs">160</text><text x="390.27" y="703.9" text-anchor="middle" textLength="17.5" lengthAdjust="spacingAndGlyphs">180</text><text x="423.30" y="703.9" text-anchor="middle" textLength="17.5" lengthAdjust="spacingAndGlyphs">200</text><text x="456.33" y="703.9" text-anchor="middle" textLength="17.5" lengthAdjust="spacingAndGlyphs">220</text><text x="489.36" y="703.9" text-anchor="middle" textLength="17.5" lengthAdjust="spacingAndGlyphs">240</text><text x="522.39" y="703.9" text-anchor="middle" textLength="17.5" lengthAdjust="spacingAndGlyphs">260</text><text x="555.42" y="703.9" text-anchor="middle" textLength="17.5" lengthAdjust="spacingAndGlyphs">280</text><text x="588.45" y="703.9" text-anchor="middle" textLength="17.5" lengthAdjust="spacingAndGlyphs">300</text><text x="621.48" y="703.9" text-anchor="middle" textLength="17.5" lengthAdjust="spacingAndGlyphs">320</text><text x="654.51" y="703.9" text-anchor="middle" textLength="17.5" lengthAdjust="spacingAndGlyphs">340</text><text x="687.54" y="703.9" text-anchor="middle" textLength="17.5" lengthAdjust="spacingAndGlyphs">360</text><text x="720.57" y="703.9" text-anchor="middle" textLength="17.5" lengthAdjust="spacingAndGlyphs">380</text><text x="753.60" y="703.9" text-anchor="middle" textLength="17.5" lengthAdjust="spacingAndGlyphs">400</text><text x="422.4" y="721.1" text-anchor="middle" textLength="30" lengthAdjust="spacingAndGlyphs">t (ms)</text><text transform="translate(37.7 544.2) rotate(-90)" text-anchor="middle" textLength="70.3" lengthAdjust="spacingAndGlyphs">Spannung (V)</text></svg>
<div style="position:absolute;left:677.5px;top:732.5px;width:94.5px;height:24px;border:1px solid #808080;border-radius:4px;background:linear-gradient(#ececec,#d2d2d2);box-shadow:1.5px 1.5px 1.5px rgba(0,0,0,0.28), inset 0 0 0 1px rgba(255,255,255,0.85);"></div>
<div class="t" style="left:691.00px;top:737.74px;font-size:12.0px;transform:scaleX(0.9614);">Plot 0</div>
<div style="position:absolute;left:732px;top:735.5px;width:27.5px;height:17.5px;background:#fff;border-top:1px solid #5a5a5a;border-left:1px solid #5a5a5a;"></div>
<svg style="position:absolute;left:733px;top:736.5px" width="28" height="18"><path d="M1.5 12.5L10 2.5L17 12.5L25.5 2.5" stroke="#1a6aab" stroke-width="1.2" fill="none"/></svg>
<div class="t" style="left:13.50px;top:745.94px;font-size:12.0px;transform:scaleX(0.9670);">Signalverlaufsgraph 3</div>
<div style="position:absolute;left:13.5px;top:763.5px;width:762px;height:342px;border:1px solid #858585;border-radius:4px;background:linear-gradient(#e9e9e9,#e2e2e2 40%,#c4c4c4);box-shadow:1.5px 1.5px 2px rgba(0,0,0,0.35), inset 1px 1px 0 0 rgba(255,255,255,0.8);box-sizing:border-box;"></div>
<svg style="position:absolute;left:14px;top:764px" width="762" height="342" viewBox="14 764 762 342" font-family="Liberation Sans, sans-serif" font-size="12"><rect x="65" y="775" width="689.5" height="282.5" fill="#fff"/><path d="M74.50 775V1057.5M83.50 775V1057.5M92.50 775V1057.5M109.50 775V1057.5M117.50 775V1057.5M126.50 775V1057.5M143.50 775V1057.5M152.50 775V1057.5M160.50 775V1057.5M177.50 775V1057.5M186.50 775V1057.5M195.50 775V1057.5M212.50 775V1057.5M220.50 775V1057.5M229.50 775V1057.5M246.50 775V1057.5M255.50 775V1057.5M263.50 775V1057.5M281.50 775V1057.5M289.50 775V1057.5M298.50 775V1057.5M315.50 775V1057.5M324.50 775V1057.5M332.50 775V1057.5M349.50 775V1057.5M358.50 775V1057.5M366.50 775V1057.5M384.50 775V1057.5M392.50 775V1057.5M401.50 775V1057.5M418.50 775V1057.5M427.50 775V1057.5M435.50 775V1057.5M452.50 775V1057.5M461.50 775V1057.5M470.50 775V1057.5M487.50 775V1057.5M495.50 775V1057.5M504.50 775V1057.5M521.50 775V1057.5M530.50 775V1057.5M538.50 775V1057.5M555.50 775V1057.5M564.50 775V1057.5M573.50 775V1057.5M590.50 775V1057.5M598.50 775V1057.5M607.50 775V1057.5M624.50 775V1057.5M633.50 775V1057.5M641.50 775V1057.5M659.50 775V1057.5M667.50 775V1057.5M676.50 775V1057.5M693.50 775V1057.5M701.50 775V1057.5M710.50 775V1057.5M727.50 775V1057.5M736.50 775V1057.5M744.50 775V1057.5M65 781.50H754.5M65 786.50H754.5M65 791.50H754.5M65 796.50H754.5M65 806.50H754.5M65 812.50H754.5M65 817.50H754.5M65 822.50H754.5M65 832.50H754.5M65 837.50H754.5M65 842.50H754.5M65 847.50H754.5M65 857.50H754.5M65 863.50H754.5M65 868.50H754.5M65 873.50H754.5M65 883.50H754.5M65 888.50H754.5M65 893.50H754.5M65 898.50H754.5M65 908.50H754.5M65 914.50H754.5M65 919.50H754.5M65 924.50H754.5M65 934.50H754.5M65 939.50H754.5M65 944.50H754.5M65 949.50H754.5M65 959.50H754.5M65 965.50H754.5M65 970.50H754.5M65 975.50H754.5M65 985.50H754.5M65 990.50H754.5M65 995.50H754.5M65 1000.50H754.5M65 1010.50H754.5M65 1016.50H754.5M65 1021.50H754.5M65 1026.50H754.5M65 1036.50H754.5M65 1041.50H754.5M65 1046.50H754.5M65 1051.50H754.5" stroke="#efefef" stroke-width="1" fill="none"/><path d="M100.50 775V1057.5M135.50 775V1057.5M169.50 775V1057.5M203.50 775V1057.5M238.50 775V1057.5M272.50 775V1057.5M306.50 775V1057.5M341.50 775V1057.5M375.50 775V1057.5M409.50 775V1057.5M444.50 775V1057.5M478.50 775V1057.5M512.50 775V1057.5M547.50 775V1057.5M581.50 775V1057.5M616.50 775V1057.5M650.50 775V1057.5M684.50 775V1057.5M719.50 775V1057.5M753.50 775V1057.5M65 776.50H754.5M65 801.50H754.5M65 827.50H754.5M65 852.50H754.5M65 878.50H754.5M65 903.50H754.5M65 929.50H754.5M65 954.50H754.5M65 980.50H754.5M65 1005.50H754.5M65 1031.50H754.5M65 1056.50H754.5" stroke="#d9d9d9" stroke-width="1" fill="none"/><path d="M66.60 1032.40 L68.32 1033.30 L70.03 1032.40 L71.75 1031.50 L73.47 1032.40 L75.18 1032.40 L76.90 1031.50 L78.62 1032.40 L80.33 1031.50 L82.05 1032.40 L83.76 1031.50 L85.48 1031.50 L87.20 1032.40 L88.91 1032.40 L90.63 1033.30 L92.35 1032.40 L94.06 1032.40 L95.78 1032.40 L97.50 1032.40 L99.21 1032.40 L100.93 1032.40 L102.65 1031.50 L104.36 1031.50 L106.08 1032.40 L107.80 1033.30 L109.51 1031.50 L111.23 1032.40 L112.95 1032.40 L114.66 1033.30 L116.38 1032.40 L118.09 1032.40 L119.81 1032.40 L121.53 1032.40 L123.24 1031.50 L124.96 1031.50 L126.68 1033.30 L128.39 1032.40 L130.11 1032.40 L131.83 1032.40 L133.54 1032.40 L135.26 1032.40 L136.98 1032.40 L138.69 1032.40 L140.41 1032.40 L142.13 1032.40 L143.84 1032.40 L145.56 1032.40 L147.28 1032.40 L148.99 1032.40 L150.71 1032.40 L152.42 1032.40 L154.14 1031.50 L155.86 1032.40 L157.57 1032.40 L159.29 1033.30 L161.01 1032.40 L162.72 1031.50 L164.44 1032.40 L166.16 1032.40 L167.87 1032.40 L169.59 1032.40 L171.31 1032.40 L173.02 1032.40 L174.74 1032.40 L176.46 1032.40 L178.17 1032.40 L179.89 1032.40 L181.61 1032.40 L183.32 1032.40 L185.04 1032.40 L186.75 1031.50 L188.47 1032.40 L190.19 1032.40 L191.90 1032.40 L193.62 1032.40 L195.34 1032.40 L197.05 1032.40 L198.77 1032.40 L200.49 1031.50 L202.20 1032.40 L203.92 1033.30 L205.64 1031.50 L207.35 1031.50 L209.07 1031.50 L210.79 1033.30 L212.50 1032.40 L214.22 1032.40 L215.94 1032.40 L217.65 1031.50 L219.37 1032.40 L221.08 1032.40 L222.80 1032.40 L224.52 1032.40 L226.23 1032.40 L227.95 1032.40 L229.67 1032.40 L231.38 1032.40 L233.10 1032.40 L234.82 1032.40 L236.53 1033.30 L238.25 1033.30 L239.97 1032.40 L241.68 1032.40 L243.40 1032.40 L245.12 1032.40 L246.83 1032.40 L248.55 1031.50 L250.27 1032.40 L251.98 1032.40 L253.70 1032.40 L255.41 1032.40 L257.13 1032.40 L258.85 1032.40 L260.56 1032.40 L262.28 1032.40 L264.00 1031.50 L265.71 1031.50 L267.43 1031.50 L269.15 1031.50 L270.86 1031.50 L272.58 1032.40 L274.30 1032.40 L276.01 1031.50 L277.73 1032.40 L279.45 1031.50 L281.16 1031.50 L282.88 1033.30 L284.60 1033.30 L286.31 1032.40 L288.03 1031.50 L289.75 1031.50 L291.46 1033.30 L293.18 1031.50 L294.89 1032.40 L296.61 1031.50 L298.33 1031.50 L300.04 1032.40 L301.76 1033.30 L303.48 1032.40 L305.19 1032.40 L306.91 1032.40 L308.63 1033.30 L310.34 1033.30 L312.06 1033.30 L313.78 1032.40 L315.49 1032.40 L317.21 1031.50 L318.93 1031.50 L320.64 1032.40 L322.36 1032.40 L324.07 1032.40 L325.79 1033.30 L327.51 1031.50 L329.22 1031.50 L330.94 1032.40 L332.66 1033.30 L334.37 1032.40 L336.09 1031.50 L337.81 1032.40 L339.52 1032.40 L341.24 1032.40 L342.96 1032.40 L344.67 1032.40 L346.39 1032.40 L348.11 1033.30 L349.82 1033.30 L351.54 1032.40 L353.26 1032.40 L354.97 1032.40 L356.69 1032.40 L358.40 1032.40 L360.12 1032.40 L361.84 1032.40 L363.55 1032.40 L365.27 1032.40 L366.99 1032.40 L368.70 1032.40 L370.50 1031.40 L373.30 987.00 L377.50 971.10 L379.60 957.10 L380.70 935.50 L382.60 921.00 L383.80 909.80 L384.70 894.40 L385.70 885.50 L387.30 875.30 L388.90 866.40 L391.20 856.20 L392.40 846.10 L394.60 833.40 L396.50 824.50 L397.40 815.60 L399.10 808.00 L401.40 799.10 L403.50 804.10 L403.90 837.20 L404.20 865.10 L406.10 888.00 L409.00 901.30 L411.80 905.20 L415.00 907.40 L416.77 907.40 L418.48 906.50 L420.20 906.50 L421.92 907.40 L423.63 907.40 L425.35 907.40 L427.06 907.40 L428.78 907.40 L430.50 907.40 L432.21 907.40 L433.93 907.40 L435.65 907.40 L437.36 907.40 L439.08 907.40 L440.80 907.40 L442.51 907.40 L444.23 906.50 L445.95 908.30 L447.66 906.50 L449.38 907.40 L451.10 907.40 L452.81 908.30 L454.53 906.50 L456.25 906.50 L457.96 906.50 L459.68 907.40 L461.39 907.40 L463.11 907.40 L464.83 907.40 L466.54 907.40 L468.26 908.30 L469.98 907.40 L471.69 907.40 L473.41 907.40 L475.13 907.40 L476.84 907.40 L478.56 907.40 L480.28 907.40 L481.99 907.40 L483.71 907.40 L485.43 906.50 L487.14 907.40 L488.86 907.40 L490.58 907.40 L492.29 908.30 L494.01 907.40 L495.73 906.50 L497.44 907.40 L499.16 906.50 L500.87 907.40 L502.59 906.50 L504.31 906.50 L506.02 907.40 L507.74 907.40 L509.46 907.40 L511.17 907.40 L512.89 907.40 L514.61 907.40 L516.32 907.40 L518.04 907.40 L519.76 907.40 L521.47 907.40 L523.19 907.40 L524.91 908.30 L526.62 907.40 L528.34 907.40 L530.05 906.50 L531.77 906.50 L533.49 906.50 L535.20 907.40 L536.92 907.40 L538.64 907.40 L540.35 908.30 L542.07 907.40 L543.79 907.40 L545.50 907.40 L547.22 907.40 L548.94 907.40 L550.65 907.40 L552.37 907.40 L554.09 907.40 L555.80 907.40 L557.52 907.40 L559.24 906.50 L560.95 908.30 L562.67 907.40 L564.38 906.50 L566.10 906.50 L567.82 907.40 L569.53 907.40 L571.25 907.40 L572.97 907.40 L574.68 907.40 L576.40 906.50 L578.12 906.50 L579.83 907.40 L581.55 907.40 L583.27 907.40 L584.98 907.40 L586.70 906.50 L588.42 907.40 L590.13 907.40 L591.85 906.50 L593.57 907.40 L595.28 907.40 L597.00 908.30 L598.72 907.40 L600.43 907.40 L602.15 907.40 L603.86 907.40 L605.58 907.40 L607.30 907.40 L609.01 907.40 L610.73 907.40 L612.45 907.40 L614.16 906.50 L615.88 908.30 L617.60 907.40 L619.31 907.40 L621.03 907.40 L622.75 907.40 L624.46 906.50 L626.18 906.50 L627.90 907.40 L629.61 907.40 L631.33 907.40 L633.04 907.40 L634.76 907.40 L636.48 907.40 L638.19 907.40 L639.91 907.40 L641.63 906.50 L643.34 906.50 L645.06 908.30 L646.78 908.30 L648.49 908.30 L650.21 906.50 L651.93 907.40 L653.64 907.40 L655.36 907.40 L657.08 907.40 L658.79 907.40 L660.51 908.30 L662.23 908.30 L663.94 908.30 L665.66 907.40 L667.38 908.30 L669.09 907.40 L670.81 907.40 L672.52 908.30 L674.24 908.30 L675.96 907.40 L677.67 907.40 L679.39 907.40 L681.11 907.40 L682.82 907.40 L684.54 907.40 L686.26 906.50 L687.97 906.50 L689.69 907.40 L691.41 907.40 L693.12 907.40 L694.84 908.30 L696.56 907.40 L698.27 907.40 L699.99 907.40 L701.71 906.50 L703.42 906.50 L705.14 906.50 L706.85 908.30 L708.57 908.30 L710.29 907.40 L712.00 907.40 L713.72 907.40 L715.44 907.40 L717.15 907.40 L718.87 907.40 L720.59 907.40 L722.30 907.40 L724.02 907.40 L725.74 907.40 L727.45 906.50 L729.17 906.50 L730.89 906.50 L732.60 907.40 L734.32 907.40 L736.03 907.40 L737.75 907.40 L739.47 907.40 L741.18 908.30 L742.90 907.40 L744.62 907.40 L746.33 907.40 L748.05 907.40 L749.77 907.40 L751.48 907.40" stroke="#17669f" stroke-width="1.42" fill="none" stroke-linejoin="round"/><path d="M65.5 1057.5V775.5H754.5" stroke="#3c3c3c" stroke-width="1" fill="none"/><path d="M59 776.30H64M59 801.81H64M59 827.32H64M59 852.83H64M59 878.34H64M59 903.85H64M59 929.36H64M59 954.87H64M59 980.38H64M59 1005.89H64M59 1031.40H64M59 1056.91H64M66.30 1059.5V1064.0M100.66 1059.5V1064.0M135.02 1059.5V1064.0M169.38 1059.5V1064.0M203.74 1059.5V1064.0M238.10 1059.5V1064.0M272.46 1059.5V1064.0M306.82 1059.5V1064.0M341.18 1059.5V1064.0M375.54 1059.5V1064.0M409.90 1059.5V1064.0M444.26 1059.5V1064.0M478.62 1059.5V1064.0M512.98 1059.5V1064.0M547.34 1059.5V1064.0M581.70 1059.5V1064.0M616.06 1059.5V1064.0M650.42 1059.5V1064.0M684.78 1059.5V1064.0M719.14 1059.5V1064.0M753.50 1059.5V1064.0" stroke="#000" stroke-width="1" fill="none"/><text x="57.0" y="781.10" text-anchor="end" textLength="11.4" lengthAdjust="spacingAndGlyphs">50</text><text x="57.0" y="806.61" text-anchor="end" textLength="11.4" lengthAdjust="spacingAndGlyphs">45</text><text x="57.0" y="832.12" text-anchor="end" textLength="11.4" lengthAdjust="spacingAndGlyphs">40</text><text x="57.0" y="857.63" text-anchor="end" textLength="11.4" lengthAdjust="spacingAndGlyphs">35</text><text x="57.0" y="883.14" text-anchor="end" textLength="11.4" lengthAdjust="spacingAndGlyphs">30</text><text x="57.0" y="908.65" text-anchor="end" textLength="11.4" lengthAdjust="spacingAndGlyphs">25</text><text x="57.0" y="934.16" text-anchor="end" textLength="11.4" lengthAdjust="spacingAndGlyphs">20</text><text x="57.0" y="959.67" text-anchor="end" textLength="11.4" lengthAdjust="spacingAndGlyphs">15</text><text x="57.0" y="985.18" text-anchor="end" textLength="11.4" lengthAdjust="spacingAndGlyphs">10</text><text x="57.0" y="1010.69" text-anchor="end" textLength="5.7" lengthAdjust="spacingAndGlyphs">5</text><text x="57.0" y="1036.20" text-anchor="end" textLength="5.7" lengthAdjust="spacingAndGlyphs">0</text><text x="57.0" y="1061.71" text-anchor="end" textLength="10.0" lengthAdjust="spacingAndGlyphs">-5</text><text x="66.30" y="1075.9" text-anchor="middle" textLength="5.8" lengthAdjust="spacingAndGlyphs">0</text><text x="100.66" y="1075.9" text-anchor="middle" textLength="11.7" lengthAdjust="spacingAndGlyphs">20</text><text x="135.02" y="1075.9" text-anchor="middle" textLength="11.7" lengthAdjust="spacingAndGlyphs">40</text><text x="169.38" y="1075.9" text-anchor="middle" textLength="11.7" lengthAdjust="spacingAndGlyphs">60</text><text x="203.74" y="1075.9" text-anchor="middle" textLength="11.7" lengthAdjust="spacingAndGlyphs">80</text><text x="238.10" y="1075.9" text-anchor="middle" textLength="17.5" lengthAdjust="spacingAndGlyphs">100</text><text x="272.46" y="1075.9" text-anchor="middle" textLength="17.5" lengthAdjust="spacingAndGlyphs">120</text><text x="306.82" y="1075.9" text-anchor="middle" textLength="17.5" lengthAdjust="spacingAndGlyphs">140</text><text x="341.18" y="1075.9" text-anchor="middle" textLength="17.5" lengthAdjust="spacingAndGlyphs">160</text><text x="375.54" y="1075.9" text-anchor="middle" textLength="17.5" lengthAdjust="spacingAndGlyphs">180</text><text x="409.90" y="1075.9" text-anchor="middle" textLength="17.5" lengthAdjust="spacingAndGlyphs">200</text><text x="444.26" y="1075.9" text-anchor="middle" textLength="17.5" lengthAdjust="spacingAndGlyphs">220</text><text x="478.62" y="1075.9" text-anchor="middle" textLength="17.5" lengthAdjust="spacingAndGlyphs">240</text><text x="512.98" y="1075.9" text-anchor="middle" textLength="17.5" lengthAdjust="spacingAndGlyphs">260</text><text x="547.34" y="1075.9" text-anchor="middle" textLength="17.5" lengthAdjust="spacingAndGlyphs">280</text><text x="581.70" y="1075.9" text-anchor="middle" textLength="17.5" lengthAdjust="spacingAndGlyphs">300</text><text x="616.06" y="1075.9" text-anchor="middle" textLength="17.5" lengthAdjust="spacingAndGlyphs">320</text><text x="650.42" y="1075.9" text-anchor="middle" textLength="17.5" lengthAdjust="spacingAndGlyphs">340</text><text x="684.78" y="1075.9" text-anchor="middle" textLength="17.5" lengthAdjust="spacingAndGlyphs">360</text><text x="719.14" y="1075.9" text-anchor="middle" textLength="17.5" lengthAdjust="spacingAndGlyphs">380</text><text x="753.50" y="1075.9" text-anchor="middle" textLength="17.5" lengthAdjust="spacingAndGlyphs">400</text><text x="408.9" y="1093.1000000000001" text-anchor="middle" textLength="30" lengthAdjust="spacingAndGlyphs">t (ms)</text><text transform="translate(37.7 916.2) rotate(-90)" text-anchor="middle" textLength="50" lengthAdjust="spacingAndGlyphs">Strom (A)</text></svg>
</body></html>
